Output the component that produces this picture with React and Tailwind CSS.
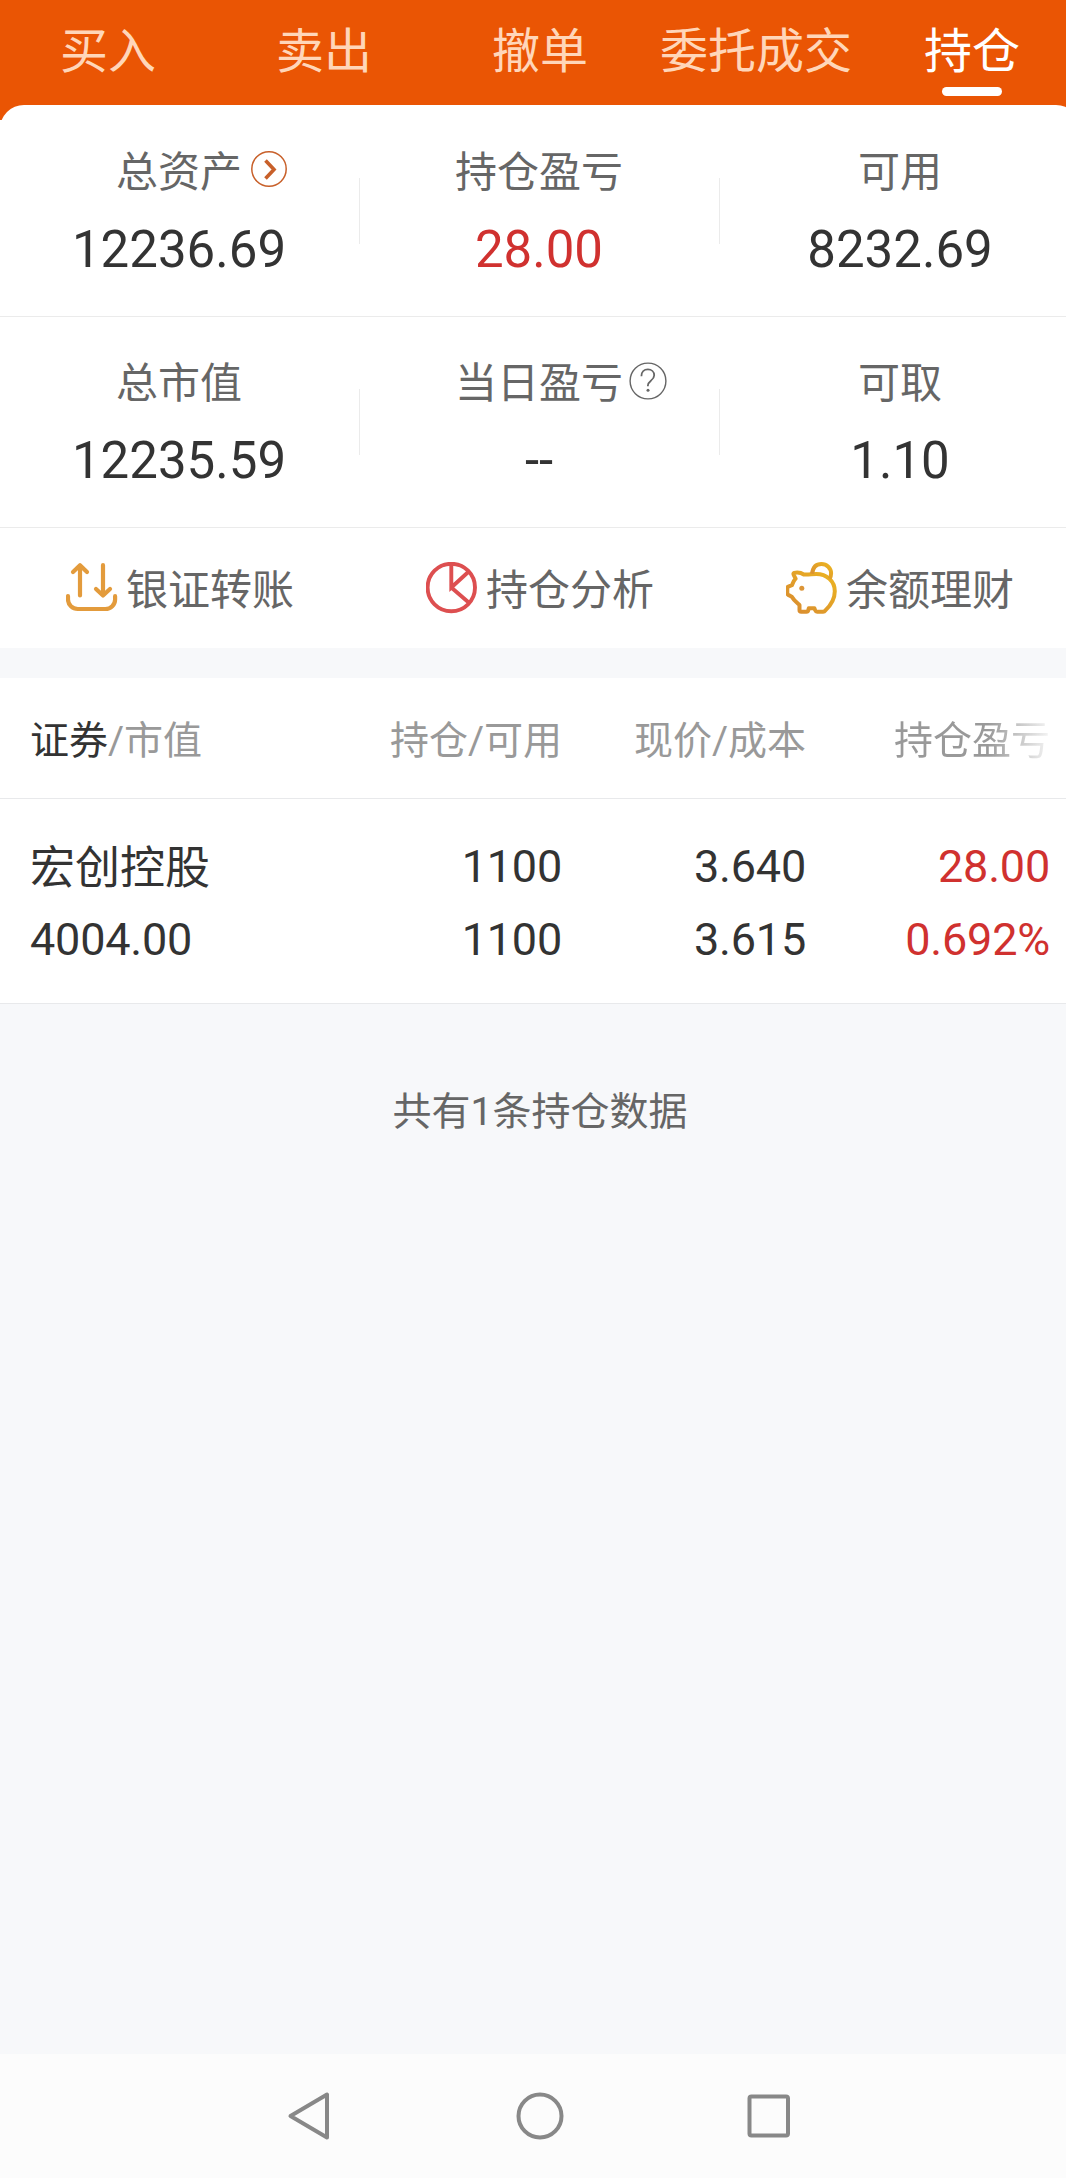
import React from 'react';

const tabs = ['买入', '卖出', '撤单', '委托成交', '持仓'];

const summary = [
  [
    { label: '总资产', value: '12236.69', icon: 'arrow' },
    { label: '持仓盈亏', value: '28.00', up: true },
    { label: '可用', value: '8232.69' },
  ],
  [
    { label: '总市值', value: '12235.59' },
    { label: '当日盈亏', value: '--', icon: 'help' },
    { label: '可取', value: '1.10' },
  ],
];

const positions = [
  {
    name: '宏创控股',
    marketValue: '4004.00',
    held: '1100',
    available: '1100',
    price: '3.640',
    cost: '3.615',
    profit: '28.00',
    percent: '0.692%',
  },
];

const ArrowIcon = () => (
  <svg className="-mr-[45px] ml-[9px] -mt-[9px] size-9 shrink-0" viewBox="0 0 36 36" fill="none" stroke="#c8602a">
    <circle cx="18" cy="18" r="17.2" strokeWidth="1.5" />
    <path d="M14.5 9.5l8.5 9-8.5 9" strokeWidth="3.6" />
  </svg>
);

const HelpIcon = () => (
  <svg className="-mr-[44px] ml-[6px] -mt-[7px] size-[38px] shrink-0" viewBox="0 0 38 38" fill="none" stroke="#666">
    <circle cx="19" cy="19" r="17.9" strokeWidth="1.4" />
    <path d="M12.4 14.2c0-4.2 2.8-6.8 6.5-6.8s6.3 2.5 6.3 5.8c0 2.8-1.6 4.1-3.3 5.5-1.9 1.6-3 2.6-3 4.7v.9" strokeWidth="1.8" />
    <circle cx="19" cy="28.3" r="1.5" fill="#666" stroke="none" />
  </svg>
);

const TransferIcon = () => (
  <svg className="size-[52px]" viewBox="0 0 52 52" fill="none" stroke="#e39b3c" strokeWidth="4.2" strokeLinecap="round" strokeLinejoin="round">
    <path d="M14 33.5V3.5M7 10l7-6.8 7 6.8" />
    <path d="M37 3.2v30M30 27l7 6.5 7-6.5" />
    <path d="M2 34.2v3.3c0 5.5 4.5 9.5 9.8 9.5h27.500c5.5 0 9.800-4.300 9.800-9.500v-3.300" />
  </svg>
);

const PieIcon = () => (
  <svg className="size-[52px]" viewBox="0 0 52 52" fill="none" stroke="#dd4f50" strokeWidth="3.9">
    <circle cx="25.3" cy="25.5" r="23.7" />
    <path d="M25.3 2v23.5L42.8 9.5M25.3 25.500l18 15.500" />
  </svg>
);

const PiggyIcon = () => (
  <svg className="size-[52px]" viewBox="0.7 0.3 52 52" fill="none" strokeWidth="4" strokeLinejoin="round">
    <defs>
      <linearGradient id="piggy" x1="1" y1="0" x2="0" y2="1">
        <stop offset="0" stopColor="#ecb521" />
        <stop offset="1" stopColor="#d88a31" />
      </linearGradient>
    </defs>
    <g stroke="url(#piggy)">
      <path d="M18.5 12.8C15.5 10.8 12 10.6 8.8 11.200c-.9.300-.8 1.200-.3 2.200l1.800 3.600c-1.800 1.800-2.800 4-3.700 6.500l-3.600 1.400c-.8.300-1 .8-1 1.500v5.200c0 .8.300 1.200 1 1.600l3.500 1.800c2 3.600 4.500 5.500 7.700 8.300v4.900c0 1 .7 1.800 1.700 1.800h5.300c1.200 0 1.600-.7 1.800-1.600l.5-1.800h5.600l.7 1.800c.4 1 .9 1.600 2 1.600h6c1 0 1.700-.4 2.300-1.300C46.500 42.500 49.500 36.800 49.500 29.500c0-10.200-8.300-17.300-18.500-17.300-4.500 0-7.500 1-12.500.6z" />
      <path d="M26.8 12C27.500 5.800 31 2.300 36.200 2.300s9.600 4.200 9.600 9.300c0 2-.5 3.800-1.500 5.500" />
    </g>
    <circle cx="16.5" cy="26.5" r="2.5" fill="#dc9538" />
  </svg>
);

const actions = [
  { label: '银证转账', Icon: TransferIcon },
  { label: '持仓分析', Icon: PieIcon },
  { label: '余额理财', Icon: PiggyIcon },
];

const SummaryCell = ({ item, last }) => (
  <div className="flex w-[360px] items-start">
    <div className="flex-1 text-center">
      <div className="flex h-[56px] items-center justify-center text-[42px] leading-[56px] text-[#666]">
        <span>{item.label}</span>
        {item.icon === 'arrow' && <ArrowIcon />}
        {item.icon === 'help' && <HelpIcon />}
      </div>
      <div className={`mt-[19px] text-[51px] leading-[60px] ${item.up ? 'text-[#d0312f]' : 'text-[#333]'}`}>
        {item.value}
      </div>
    </div>
    {!last && <div className="ml-px mt-[33px] h-[66px] w-px bg-[#ebebeb]" />}
  </div>
);

const NavBar = () => (
  <nav className="flex h-[124px] items-center justify-center bg-[#fcfcfc]">
    <div className="flex w-[228px] justify-center">
      <svg className="mr-[6px] size-[50px]" viewBox="0 0 50 50" fill="none" stroke="#888" strokeWidth="4" strokeLinejoin="round">
        <path d="M43 3.5v43L6.5 25z" />
      </svg>
    </div>
    <div className="flex w-[228px] justify-center">
      <svg className="size-[50px]" viewBox="0 0 50 50" fill="none" stroke="#888" strokeWidth="4">
        <circle cx="25" cy="25" r="21.5" />
      </svg>
    </div>
    <div className="flex w-[228px] justify-center">
      <svg className="size-[50px]" viewBox="0 0 50 50" fill="none" stroke="#888" strokeWidth="4">
        <rect x="6.5" y="5.5" width="38.5" height="39" rx="2" />
      </svg>
    </div>
  </nav>
);

const App = () => {
  return (
    <div className="w-full overflow-hidden">
      <div className="flex h-[2178px] w-[1080px] flex-col bg-[#f7f8fa] font-[Roboto,'Noto_Sans_CJK_SC',sans-serif]">
        <header className="flex h-[120px] shrink-0 bg-[#ea5504] pt-6">
          {tabs.map((tab, i) => (
            <div key={tab} className="flex w-[216px] flex-col items-center">
              <span className={`text-[48px] leading-[56px] ${i === 4 ? 'text-white' : 'text-[#ffd6b9]'}`}>{tab}</span>
              {i === 4 && <span className="mt-[7px] h-[9px] w-[60px] rounded-full bg-white" />}
            </div>
          ))}
        </header>

        <div className="bg-white">
          <main className="-mt-[15px] rounded-t-[24px] bg-white pt-px">
            {summary.map((row, i) => (
              <div key={i} className="flex h-[211px] items-start border-b border-[#ebebeb] pt-[39px]">
                {row.map((item, j) => (
                  <SummaryCell key={item.label} item={item} last={j === 2} />
                ))}
              </div>
            ))}
            <div className="flex h-[120px]">
              {actions.map(({ label, Icon }) => (
                <div key={label} className="flex w-[360px] items-center justify-center gap-2">
                  <Icon />
                  <span className="mt-[6px] text-[42px] leading-[56px] text-[#666]">{label}</span>
                </div>
              ))}
            </div>
          </main>
        </div>

        <section className="mt-[30px] bg-white">
          <div className="grid h-[121px] grid-cols-[288px_244px_244px_244px] items-center border-b border-[#e8e9eb] px-[30px] pt-[5px] text-right text-[39px] leading-[54px] text-[#999]">
            <div className="text-left">
              <span className="text-[#333]">证券</span>/市值
            </div>
            <div>持仓/可用</div>
            <div>现价/成本</div>
            <div>
              <span className="bg-linear-to-r from-[#999] from-60% to-[#999]/10 bg-clip-text text-transparent">持仓盈亏</span>
            </div>
          </div>
          {positions.map((p) => (
            <div
              key={p.name}
              className="grid h-[205px] grid-cols-[288px_244px_244px_244px] content-start border-b border-[#e8e9eb] px-[30px] pt-[31px] text-right text-[45px] leading-[73px] tracking-[-0.2px] text-[#333]"
            >
              <div className="h-[73px] text-left leading-[77px] tracking-normal">{p.name}</div>
              <div>{p.held}</div>
              <div>{p.price}</div>
              <div className="text-[#d0312f]">{p.profit}</div>
              <div className="text-left">{p.marketValue}</div>
              <div>{p.available}</div>
              <div>{p.cost}</div>
              <div className="text-[#d0312f]">{p.percent}</div>
            </div>
          ))}
        </section>

        <p className="mt-[81px] flex-1 text-center text-[39px] leading-[54px] text-[#666]">
          共有{positions.length}条持仓数据
        </p>

        <NavBar />
      </div>
    </div>
  );
};

export default App;
